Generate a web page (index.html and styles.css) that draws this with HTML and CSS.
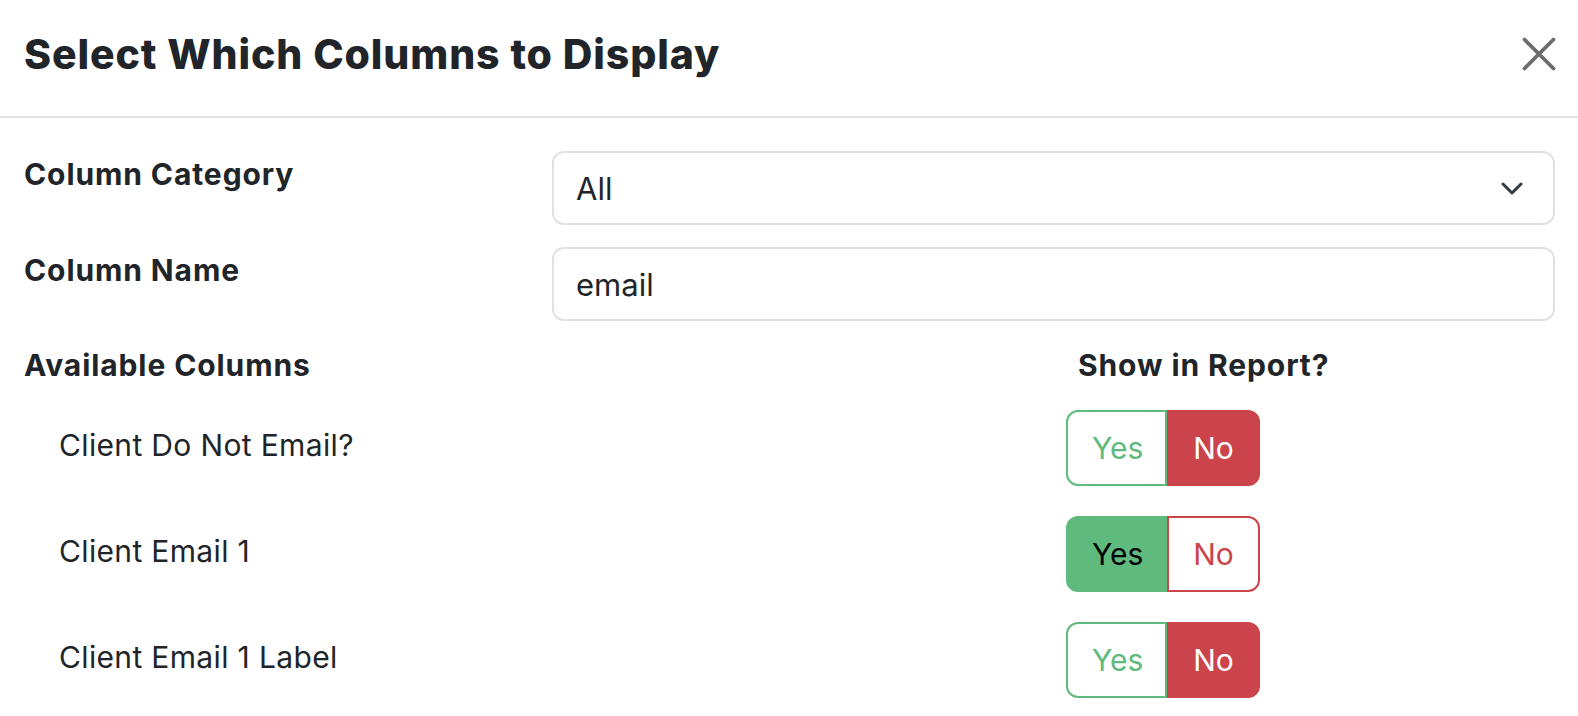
FILE: index.html
```html
<!DOCTYPE html>
<html lang="en">
<head>
<meta charset="utf-8">
<title>Select Which Columns to Display</title>
<link rel="stylesheet" href="styles.css">
</head>
<body>
<div class="modal">
  <div class="modal-header">
    <h5 class="modal-title">Select Which Columns to Display</h5>
    <button class="close" type="button" aria-label="Close">
      <svg width="34" height="34" viewBox="0 0 34 34"><path d="M2.5 2.5 L31.5 31.5 M31.5 2.5 L2.5 31.5" stroke="#6c6c6c" stroke-width="3.8" stroke-linecap="round" fill="none"/></svg>
    </button>
  </div>
  <div class="modal-body">
    <div class="form-grid">
      <label class="form-label">Column Category</label>
      <div class="select">
        <span>All</span>
        <svg width="22" height="13" viewBox="0 0 22 13"><path d="M2 2 L11 11 L20 2" stroke="#343a40" stroke-width="3" stroke-linecap="round" stroke-linejoin="round" fill="none"/></svg>
      </div>
      <label class="form-label">Column Name</label>
      <input class="text-input" type="text" value="email">
    </div>
    <div class="columns-head">
      <div class="head-label">Available Columns</div>
      <div class="head-show">Show in Report?</div>
    </div>
    <div class="col-list">
      <div class="col-row">
        <div class="col-name">Client Do Not Email?</div>
        <div class="toggle"><button class="btn yes">Yes</button><button class="btn no active">No</button></div>
      </div>
      <div class="col-row">
        <div class="col-name">Client Email 1</div>
        <div class="toggle"><button class="btn yes active">Yes</button><button class="btn no">No</button></div>
      </div>
      <div class="col-row">
        <div class="col-name">Client Email 1 Label</div>
        <div class="toggle"><button class="btn yes">Yes</button><button class="btn no active">No</button></div>
      </div>
    </div>
  </div>
</div>
</body>
</html>
```
FILE: styles.css
```css
* { box-sizing: border-box; }
html, body { margin: 0; padding: 0; background: #fff; }
body {
  font-family: "Inter", "Liberation Sans", sans-serif;
  color: #212529;
  font-size: 30px;
}
.modal { width: 1578px; }
.modal-header {
  height: 118px;
  border-bottom: 2px solid #dee2e6;
  display: flex;
  justify-content: space-between;
  align-items: flex-start;
  padding: 30px 22px 0 24px;
}
.modal-title {
  margin: 0;
  font-size: 41px;
  line-height: 48px;
  font-weight: 800;
  letter-spacing: 0.9px;
  color: #212529;
}
.close {
  margin-top: 7px;
  border: 0;
  background: none;
  padding: 0;
  width: 34px;
  height: 34px;
  display: flex;
}
.modal-body { padding: 33px 23px 0 24px; }
.form-grid {
  display: grid;
  grid-template-columns: 528px 1fr;
  row-gap: 22px;
}
.form-label {
  font-weight: 700;
  font-size: 30px;
  letter-spacing: 0.9px;
  line-height: 42px;
  padding-top: 2px;
}
.select, .text-input {
  height: 74px;
  border: 2px solid #dee2e6;
  border-radius: 12px;
  font-family: "Inter", "Liberation Sans", sans-serif;
  font-size: 31px;
  color: #212529;
  background: #fff;
}
.select {
  display: flex;
  align-items: center;
  justify-content: space-between;
  padding: 0 30px 0 22px;
}
.text-input {
  width: 100%;
  padding: 0 22px;
  outline: none;
}
.columns-head {
  margin-top: 23px;
  display: grid;
  grid-template-columns: 1042px auto;
  font-weight: 700;
  font-size: 30px;
  letter-spacing: 0.9px;
  line-height: 42px;
}
.head-show { padding-left: 12px; }
.col-list {
  margin-top: 24px;
  display: flex;
  flex-direction: column;
  gap: 30px;
}
.col-row {
  display: grid;
  grid-template-columns: 1042px auto;
  align-items: center;
  height: 76px;
}
.col-name {
  padding-left: 35px;
  padding-bottom: 6px;
  line-height: 42px;
  font-size: 30px;
  letter-spacing: 0.35px;
}
.toggle { display: flex; height: 76px; }
.btn {
  font-family: "Inter", "Liberation Sans", sans-serif;
  font-size: 30px;
  background: #fff;
  border: 2px solid;
  padding: 0 24px;
  height: 76px;
  cursor: pointer;
}
.btn.yes {
  border-color: #5fba7d;
  color: #5fba7d;
  border-radius: 12px 0 0 12px;
  width: 101px;
}
.btn.no {
  border-color: #cc444b;
  color: #cc444b;
  border-radius: 0 12px 12px 0;
  width: 93px;
}
.btn.yes.active { background: #5fba7d; color: #000; }
.btn.no.active { background: #cc444b; color: #fff; }
```
